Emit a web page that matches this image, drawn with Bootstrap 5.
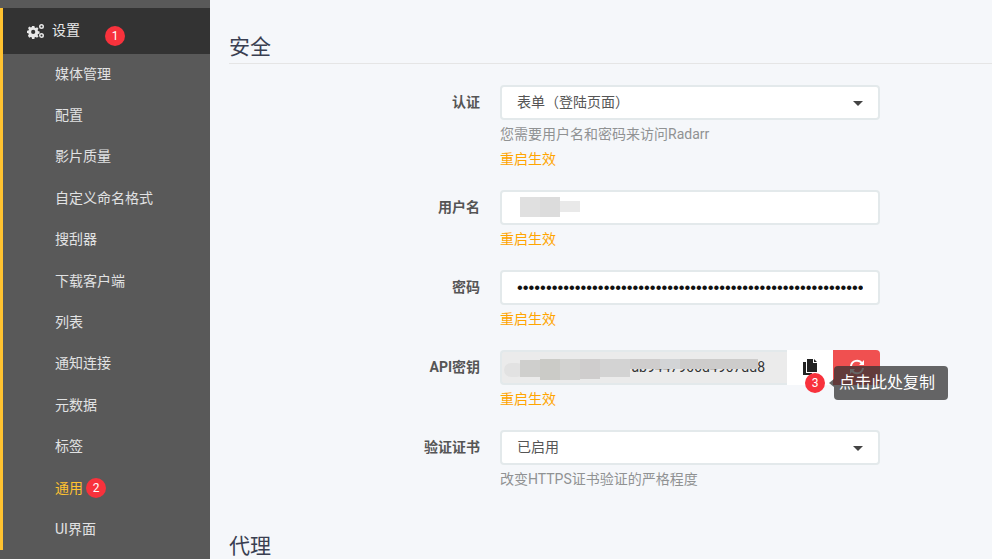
<!doctype html>
<html lang="zh"><head><meta charset="utf-8"><title>Radarr</title>
<link href="https://cdn.jsdelivr.net/npm/bootstrap@5.3.0/dist/css/bootstrap.min.css" rel="stylesheet">
<style>
html,body{height:559px;overflow:hidden}
body{background:#f5f7fa;color:#555;font-family:"Roboto","Noto Sans CJK SC",sans-serif;font-size:14px}
.side{width:210px;height:559px;background:#595959;flex:none;padding-top:8px}
.side-in{border-left:3px solid #ffc230;height:542px}
.s-head{height:46px;background:#333;color:#e8e8e8;padding-left:24px;position:relative}
.s-head svg{margin-right:7px}
.s-head .s-txt{position:relative;top:-1px}
.s-item{height:41.4px;color:#e1e2e3;padding:0 0 1px 52px;display:flex;align-items:center}
.s-item.on{color:#ffc230}
.num{width:20px;height:20px;border-radius:50%;background:#f8323c;color:#fff;font-size:12px;display:flex;align-items:center;justify-content:center;line-height:1}
.num-a{position:absolute;left:102px;top:18px}
.num-b{margin-left:3px}
.num-c{position:absolute;left:18px;top:23px}
.cont{flex:1;padding:0 0 0 19px;min-width:0}
.lg{font-size:21px;color:#3a3f51;line-height:26px;font-weight:400;margin:0}
.lg-a{padding-top:34px;border-bottom:1px solid #e5e5e5;height:64px;margin-bottom:21px}
.lg-b{padding-top:44px}
.frow{display:flex;gap:20px}
.frow+.frow{margin-top:21px}
.lab{width:251px;text-align:right;font-weight:700;color:#555;font-size:14px;line-height:34px;margin:0;flex:none}
.fld{width:380px;flex:none}
.inp{height:35px;width:100%;border:2px solid #e3e9eb;border-radius:4px;background:#fff;color:#555;font-size:14px;padding:0 15px;position:relative;display:flex;align-items:center}
.hlp{color:#909293;font-size:14px;line-height:20px;margin-top:4px}
.rst{color:#ffa500;font-size:14px;line-height:20px;margin-top:4px;height:20px}
.hlp+.rst{margin-top:5px}
.caret{position:absolute;right:15px;top:14px;width:0;height:0;border-left:5px solid transparent;border-right:5px solid transparent;border-top:5px solid #444}
.patch{position:absolute;filter:blur(.6px)}
.pw{font-family:"Liberation Sans",sans-serif;font-size:16.500px;color:#111;white-space:nowrap;overflow:hidden;line-height:1}
.key{width:287px;background:#ebebeb;border-radius:4px 0 0 4px;border-right:0;justify-content:flex-end;padding-right:22px;color:#333;overflow:hidden}
.b-copy{width:46px;height:35px;background:#fff;display:flex;align-items:center;justify-content:center;position:relative;padding-bottom:2px}
.b-reset{width:47px;height:35px;background:#f05050;border-radius:0 4px 4px 0;display:flex;align-items:center;justify-content:center;padding-bottom:2px}
.tipx{position:absolute;left:47px;top:16px;background:rgba(51,51,51,.75);color:#fff;border-radius:4px;width:114px;height:34px;font-size:16px;display:flex;align-items:center;padding-left:5px;white-space:nowrap;z-index:3}
.tipx::before{content:"";position:absolute;left:-5px;top:13px;border-top:4px solid transparent;border-bottom:4px solid transparent;border-right:5px solid rgba(51,51,51,.75)}
.hold{position:relative}
.p1{background:#e0e0e0}.p2{background:#dcdcdc}.p3{background:#e9e9e9}
.q0{background:#e2e2e2;border-radius:8px}.q1{background:#cfcfcd}.q2{background:#cbcbc7}.q3{background:#d2d2d0}.q4{background:#cfcdcd}.q5{background:#d3d3d3}.q6{background:#d2d4d6}.q7{background:#cdcccb}
</style></head>
<body>
<div class="d-flex">
<nav class="side"><div class="side-in">
<div class="s-head d-flex align-items-center">
<svg width="18" height="15" viewBox="0 0 18 15"><g fill="#e8e8e8"><path fill-rule="evenodd" d="M5 2h2.400l.3 1.600 1 .5 1.400-.8 1.400 1.500-.9 1.300.4 1 1.600.4v2.200l-1.600.3-.4 1 .9 1.400-1.500 1.400-1.300-.9-1 .4-.3 1.600H5l-.3-1.600-1-.4-1.400.9L.9 11.700l.9-1.400-.4-1L0 9V6.800l1.500-.4.4-1-.9-1.300 1.500-1.500 1.300.8 1-.5zM6.200 5.800a2.100 2.100 0 1 0 0 4.200 2.100 2.100 0 0 0 0-4.200z"/><path fill-rule="evenodd" d="M14.500 0a2.500 2.500 0 1 1 0 5 2.500 2.500 0 0 1 0-5zm0 1.500a1 1 0 1 0 0 2 1 1 0 0 0 0-2zM14.500 9a2.500 2.500 0 1 1 0 5 2.500 2.500 0 0 1 0-5zm0 1.500a1 1 0 1 0 0 2 1 1 0 0 0 0-2z"/></g></svg>
<span class="s-txt">设置</span><span class="num num-a">1</span></div>
<div class="s-item">媒体管理</div><div class="s-item">配置</div><div class="s-item">影片质量</div><div class="s-item">自定义命名格式</div><div class="s-item">搜刮器</div><div class="s-item">下载客户端</div><div class="s-item">列表</div><div class="s-item">通知连接</div><div class="s-item">元数据</div><div class="s-item">标签</div>
<div class="s-item on">通用<span class="num num-b">2</span></div><div class="s-item">UI界面</div>
</div></nav>
<main class="cont">
<h2 class="lg lg-a">安全</h2>
<div class="frow"><label class="lab">认证</label><div class="fld"><div class="inp">表单（登陆页面）<i class="caret"></i></div><div class="hlp">您需要用户名和密码来访问Radarr</div><div class="rst">重启生效</div></div></div>
<div class="frow"><label class="lab">用户名</label><div class="fld"><div class="inp"><i class="patch p1" style="left:18px;top:5px;width:20px;height:20px"></i><i class="patch p2" style="left:38px;top:5px;width:20px;height:20px"></i><i class="patch p3" style="left:58px;top:9px;width:20px;height:11px"></i></div><div class="rst">重启生效</div></div></div>
<div class="frow"><label class="lab">密码</label><div class="fld"><div class="inp"><span class="pw">••••••••••••••••••••••••••••••••••••••••••••••••••••••••••••</span></div><div class="rst">重启生效</div></div></div>
<div class="frow"><label class="lab">API密钥</label><div class="fld"><div class="d-flex hold"><div class="inp key">7ab9447906d4967dd8
<i class="patch q0" style="left:2px;top:11px;width:20px;height:14px"></i><i class="patch q1" style="left:18px;top:8px;width:20px;height:17px"></i><i class="patch q2" style="left:38px;top:7px;width:20px;height:21px"></i><i class="patch q3" style="left:58px;top:7px;width:20px;height:21px"></i><i class="patch q4" style="left:78px;top:7px;width:20px;height:20px"></i><i class="patch q5" style="left:98px;top:7px;width:30px;height:18px"></i><i class="patch q4" style="left:128px;top:7px;width:30px;height:10px"></i><i class="patch q6" style="left:158px;top:7px;width:20px;height:10px"></i><i class="patch q7" style="left:178px;top:7px;width:78px;height:10px"></i></div><div class="b-copy"><svg width="14" height="16" viewBox="0 0 14 16"><path fill="#222" d="M4 0h6v4h4v9H4zM11 0l3 3h-3zM0 3h3v11h6v2H0z"/></svg><span class="num num-c">3</span><span class="tipx">点击此处复制</span></div><div class="b-reset"><svg width="16" height="16" viewBox="0 0 16 16" fill="none" stroke="#fff" stroke-width="2"><path d="M2 7a6 6 0 0 1 11-2.500M14 9a6 6 0 0 1-11 2.500"/><path fill="#fff" stroke="none" d="M15 1v5h-5zM1 15v-5h5z"/></svg></div></div><div class="rst">重启生效</div></div></div>
<div class="frow"><label class="lab">验证证书</label><div class="fld"><div class="inp">已启用<i class="caret"></i></div><div class="hlp">改变HTTPS证书验证的严格程度</div></div></div>
<h2 class="lg lg-b">代理</h2>
</main>
</div>
</body></html>
